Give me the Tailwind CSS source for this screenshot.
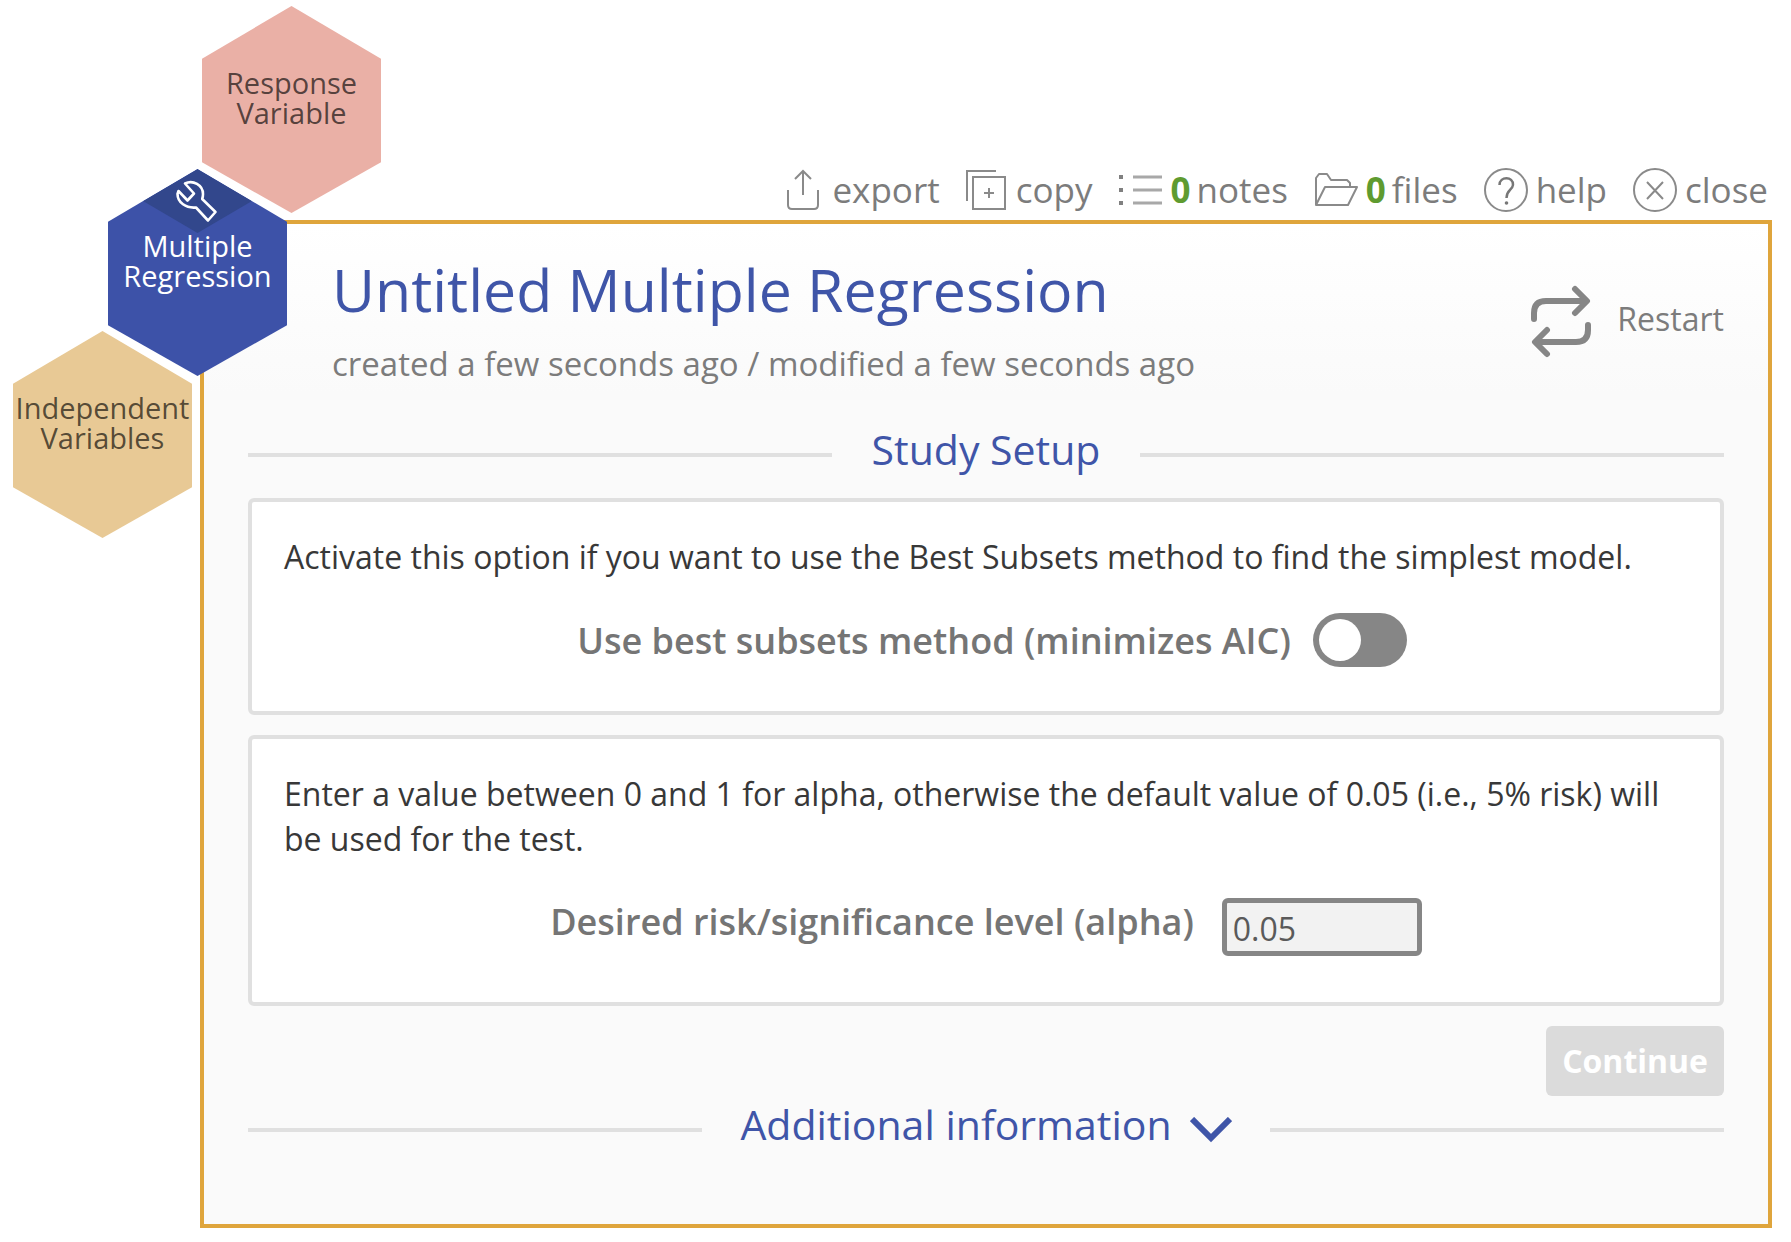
<!DOCTYPE html>
<html lang="en">
<head>
    <meta charset="UTF-8">
    <meta name="viewport" content="width=device-width, initial-scale=1.0">
    <title>Multiple Regression</title>
    <script src="https://cdn.jsdelivr.net/npm/@tailwindcss/browser@4"></script>
</head>
<body class="relative bg-white font-['Open_Sans',sans-serif] text-[#7c7c7c]">
    <!-- Hexagon navigation, hangs over the panel corner -->
    <nav class="absolute left-0 top-0 z-10 text-center text-[29px] leading-[30px]">
        <a href="#response" class="absolute left-[202px] top-[6px] h-[207px] w-[179px] bg-[#eab0a6] pt-[62px] text-black/65 [clip-path:polygon(50%_0,100%_25.5%,100%_75.5%,50%_100%,0_75.5%,0_25.5%)]">Response<br>Variable</a>
        <a href="#regression" class="absolute left-[108px] top-[169px] h-[207px] w-[179px] bg-[#3d52a8] pt-[62px] text-white [clip-path:polygon(50%_0,100%_25.5%,100%_75.5%,50%_100%,0_75.5%,0_25.5%)]">
            <svg class="absolute left-[35px] top-0" width="109" height="64" viewBox="0 0 109 64" fill="none">
                <path d="M54.500 0L109 32L54.500 64L0 32Z" fill="#32478c"/>
                <path d="M42 14.500C50 10.500 60 16 60 25C60 27 59.700 28.500 59.200 30L72.500 43L65 51.500L53 38.500C43 39.500 34.500 33.500 34.500 25L35.500 22L44.500 31.500L51 24.500Z" stroke="#fff" stroke-width="2.600" stroke-linejoin="round"/>
            </svg>
            Multiple<br>Regression
        </a>
        <a href="#independent" class="absolute left-[13px] top-[331px] h-[207px] w-[179px] bg-[#e8c995] pt-[62px] text-black/65 [clip-path:polygon(50%_0,100%_25.5%,100%_75.5%,50%_100%,0_75.5%,0_25.5%)]">Independent<br>Variables</a>
    </nav>

    <div class="ml-[200px] mr-[19px] pb-3 pt-[158px]">
        <!-- Toolbar -->
        <div class="flex h-[64px] items-center justify-end gap-[26px] pr-1 text-[35px] -mb-[2px]">
            <button type="button" class="flex items-center gap-3">
                <svg width="34" height="44" viewBox="0 0 34 44" fill="none" stroke="#8a8a8a" stroke-width="2">
                    <path d="M2 22V37Q2 41 6 41H28Q32 41 32 37V22"/>
                    <path d="M17 27V3M9 11L17 3L25 11"/>
                </svg>
                export
            </button>
            <button type="button" class="flex items-center gap-[10px]">
                <svg width="40" height="44" viewBox="0 0 40 44" fill="none" stroke="#8a8a8a" stroke-width="2">
                    <path d="M1 33V3H30"/>
                    <path d="M7 9H39V41H7Z"/>
                    <path d="M18 25H28M23 20V30"/>
                </svg>
                copy
            </button>
            <button type="button" class="flex items-center gap-2">
                <svg width="44" height="44" viewBox="0 0 44 44" fill="none" stroke="#a8a8a8" stroke-width="3">
                    <path d="M15 9H44M15 22H44M15 35H44"/>
                    <path d="M1 9H5M1 22H5M1 35H5" stroke="#808080" stroke-width="4"/>
                </svg>
                <span><b class="mr-[6px] font-bold text-[#5f9b30]">0</b>notes</span>
            </button>
            <button type="button" class="flex items-center gap-2">
                <svg width="44" height="44" viewBox="0 0 44 44" fill="none" stroke="#8a8a8a" stroke-width="2" stroke-linejoin="round">
                    <path d="M2 37V10L5 6H13L17 12H33L36 15V18"/>
                    <path d="M2 37L11 19H43L34 37Z"/>
                </svg>
                <span><b class="mr-[6px] font-bold text-[#5f9b30]">0</b>files</span>
            </button>
            <button type="button" class="flex items-center gap-2">
                <svg width="44" height="44" viewBox="0 0 44 44" fill="none" stroke="#8a8a8a" stroke-width="2">
                    <circle cx="22" cy="22" r="21"/>
                    <path d="M15.500 17C15.500 8 29.500 8 29 17C28.500 22 22.500 22 22.500 30" stroke="#777" stroke-width="2.500"/>
                    <circle cx="22.500" cy="35" r="1.800" fill="#777" stroke="none"/>
                </svg>
                help
            </button>
            <button type="button" class="flex items-center gap-2">
                <svg width="44" height="44" viewBox="0 0 44 44" fill="none" stroke="#8a8a8a" stroke-width="2">
                    <circle cx="22" cy="22" r="21"/>
                    <path d="M14 14L30 31M30 14L14 31"/>
                </svg>
                close
            </button>
        </div>

        <!-- Study panel -->
        <main class="border-4 border-[#dfa53c] bg-[linear-gradient(to_bottom,#fff,#fafafa_170px)] px-[44px] pb-[72px] pt-[35px]">
            <header class="flex items-center justify-between pl-[84px]">
                <div>
                    <h1 class="text-[59px] leading-[60px] text-[#3f55a8]">Untitled Multiple Regression</h1>
                    <p class="mt-[25px] text-[33px] leading-[40px]">created a few seconds ago / modified a few seconds ago</p>
                </div>
                <button type="button" class="flex items-start gap-[26px] text-[32px] leading-[68px]">
                    <svg width="60" height="74" viewBox="0 0 60 74" fill="none" stroke="#868686" stroke-width="6" stroke-linecap="round" stroke-linejoin="round">
                        <path d="M3 34V28Q3 16 15 16H54M44 4L56 16L44 28"/>
                        <path d="M57 40V45Q57 57 45 57H6M16 45L4 57L16 69"/>
                    </svg>
                    Restart
                </button>
            </header>

            <div class="mt-[37px] flex items-center gap-[40px]">
                <div class="mt-3 h-1 grow bg-[#e0e0e0]"></div>
                <h2 class="text-[41px] leading-[56px] text-[#3f55a8]">Study Setup</h2>
                <div class="mt-3 h-1 grow bg-[#e0e0e0]"></div>
            </div>

            <form class="mt-[21px]">
                <section class="rounded-md border-4 border-[#e0e0e0] bg-white px-8 pb-[44px] pt-8 text-[32px] leading-[45px]">
                    <p class="text-[#383838]">Activate this option if you want to use the Best Subsets method to find the simplest model.</p>
                    <div class="mt-[34px] flex items-center justify-center gap-[22px] pl-3">
                        <label for="subsets" class="text-[36px] font-semibold text-[#757575]">Use best subsets method (minimizes AIC)</label>
                        <input id="subsets" type="checkbox" role="switch" class="flex h-[54px] w-[94px] appearance-none items-center rounded-full bg-[#868686] px-[6px] before:size-[42px] before:rounded-full before:bg-white checked:justify-end checked:bg-[#3d52a8]">
                    </div>
                </section>

                <section class="mt-5 rounded-md border-4 border-[#e0e0e0] bg-white px-8 pb-[46px] pt-8 text-[32px] leading-[45px]">
                    <p class="text-[#383838]">Enter a value between 0 and 1 for alpha, otherwise the default value of 0.05 (i.e., 5% risk) will be used for the test.</p>
                    <div class="mt-[37px] flex items-start justify-center gap-[28px]">
                        <label for="alpha" class="text-[36px] font-semibold leading-[48px] text-[#757575]">Desired risk/significance level (alpha)</label>
                        <input id="alpha" type="text" value="0.05" class="h-[58px] w-[200px] rounded-md border-[5px] border-[#868686] bg-[#f2f2f2] px-[6px] pt-[2px] text-[#5a5a5a]">
                    </div>
                </section>

                <div class="mt-5 flex justify-end">
                    <button type="submit" disabled class="h-[70px] rounded-md bg-[#dbdbdb] px-4 text-[32px] font-bold text-white">Continue</button>
                </div>
            </form>

            <div class="flex items-center gap-[38px]">
                <div class="mt-3 h-1 grow bg-[#e0e0e0]"></div>
                <button type="button" class="flex items-center gap-[18px] text-[41px] leading-[56px] text-[#3f55a8]">
                    Additional information
                    <svg class="mt-3" width="42" height="26" viewBox="0 0 42 26" fill="none" stroke="currentColor" stroke-width="6">
                        <path d="M2 2L21 21L40 2"/>
                    </svg>
                </button>
                <div class="mt-3 h-1 grow bg-[#e0e0e0]"></div>
            </div>
        </main>
    </div>
</body>
</html>
